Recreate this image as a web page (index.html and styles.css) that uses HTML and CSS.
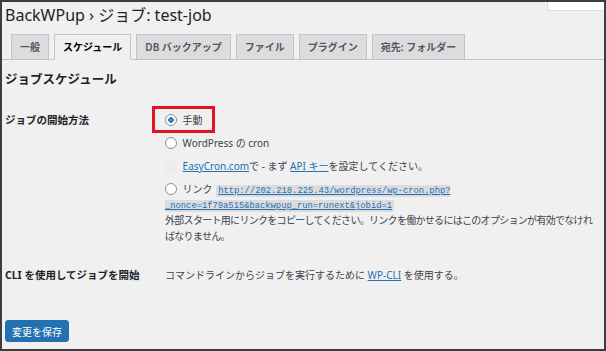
FILE: index.html
```html
<!DOCTYPE html>
<html lang="ja">

<head>
    <meta charset="UTF-8">
    <meta name="viewport" content="width=device-width, initial-scale=1.0">
    <title>BackWPup › ジョブ: test-job</title>
    <link rel="stylesheet" href="styles.css">
</head>

<body>
    <div class="frame">
        <div class="top">
            <h1 class="page-title">BackWPup › ジョブ: test-job</h1>
            <div class="screen-opts"></div>
        </div>

        <nav class="tabs">
            <a class="tab" href="#">一般</a>
            <a class="tab active" href="#">スケジュール</a>
            <a class="tab" href="#">DB バックアップ</a>
            <a class="tab" href="#">ファイル</a>
            <a class="tab" href="#">プラグイン</a>
            <a class="tab" href="#">宛先: フォルダー</a>
        </nav>

        <h2 class="section-title">ジョブスケジュール</h2>

        <div class="form-row">
            <div class="row-label">ジョブの開始方法</div>
            <div class="row-field">
                <label class="option">
                    <span class="highlight"><input type="radio" name="activetype" checked> 手動</span>
                </label>
                <label class="option">
                    <input type="radio" name="activetype"> WordPress の cron
                </label>
                <label class="option">
                    <input type="checkbox" disabled> <a href="#">EasyCron.com</a>で - まず <a href="#">API キー</a>を設定してください。
                </label>
                <label class="option link-option">
                    <input type="radio" name="activetype"> リンク <code><a href="#">http://202.218.225.43/wordpress/wp-cron.php?<wbr>_nonce=1f79a515&amp;backwpup_run=runext&amp;jobid=1</a></code>
                </label>
                <p class="description">外部スタート用にリンクをコピーしてください。リンクを働かせるにはこのオプションが有効でなければなりません。</p>
            </div>
        </div>

        <div class="form-row">
            <div class="row-label">CLI を使用してジョブを開始</div>
            <div class="row-field">
                <p class="plain">コマンドラインからジョブを実行するために <a href="#">WP-CLI</a> を使用する。</p>
            </div>
        </div>

        <button class="save-btn" type="button">変更を保存</button>
    </div>
</body>

</html>
```

FILE: styles.css
```css
body {
    margin: 0;
    padding: 0;
    font-family: "Noto Sans", "Noto Sans CJK JP", sans-serif;
    font-size: 10px;
    color: #3c434a;
    background: #fff;
}

.frame {
    height: 351px;
    box-sizing: border-box;
    border: 2px solid #3d3d3d;
    background: #f0f0f1;
    padding: 0 3px;
    overflow: hidden;
}

.top {
    display: flex;
    justify-content: space-between;
    align-items: flex-start;
}

.page-title {
    margin: 0;
    padding-top: 1px;
    font-size: 16px;
    line-height: 24px;
    font-weight: 400;
    color: #1d2327;
}

.screen-opts {
    width: 56px;
    height: 8px;
    margin-right: -3px;
    background: #fff;
    border: 1px solid #dcdcde;
    border-top: none;
    border-right: none;
    border-radius: 0 0 0 3px;
}

.tabs {
    display: flex;
    gap: 5px;
    margin: 7px -3px 0;
    padding-left: 9px;
    border-bottom: 1px solid #c3c4c7;
}

.tab {
    display: block;
    padding: 0 8px;
    height: 24px;
    line-height: 24px;
    font-size: 10px;
    font-weight: 600;
    color: #50575e;
    text-decoration: none;
    background: #dcdcde;
    border: 1px solid #c3c4c7;
    border-bottom: none;
    margin-bottom: -1px;
}

.tab.active {
    background: #f0f0f1;
    color: #000;
    border-bottom: 1px solid #f0f0f1;
}

.section-title {
    margin: 11px 0 12px;
    font-size: 12.5px;
    line-height: 18px;
    font-weight: 700;
    color: #1d2327;
}

.form-row {
    display: grid;
    grid-template-columns: 160px 1fr;
    padding: 12px 0;
}

.row-label {
    font-weight: 700;
    font-size: 10.5px;
    line-height: 15px;
    color: #1d2327;
}

.row-field a {
    color: #2271b1;
}

.option {
    display: block;
    line-height: 15px;
    margin-bottom: 8px;
}

.link-option {
    margin-bottom: 0;
}

.plain {
    margin: 0;
    line-height: 15px;
}

.highlight {
    position: relative;
}

.highlight::after {
    content: "";
    position: absolute;
    left: -13px;
    top: -7px;
    right: -12px;
    bottom: -6px;
    border: 3px solid #e5131d;
}

.option input {
    appearance: none;
    width: 12px;
    height: 12px;
    margin: 0 3px 0 0;
    vertical-align: -2px;
    background: #fff;
    border: 1px solid #8c8f94;
    border-radius: 50%;
    box-sizing: border-box;
}

.option input:checked {
    border-color: #8c8f94;
    background: radial-gradient(circle, #3582c4 0 2.6px, #fff 3px);
}

.option input[type="checkbox"] {
    border-radius: 2px;
    border-color: #ececec;
    background: #ececec;
}

code {
    font-family: "Liberation Mono", monospace;
    font-size: 8.8px;
    line-height: 10px;
    background: #dcdcde;
    padding: 1px 2px;
    margin-left: 1px;
}

code a {
    color: #2271b1;
}

.description {
    margin: 0;
    line-height: 16px;
    letter-spacing: -0.7px;
    color: #3c434a;
}

.save-btn {
    display: block;
    margin-top: 25px;
    height: 22px;
    padding: 0 6px;
    font-family: "Noto Sans", "Noto Sans CJK JP", sans-serif;
    font-size: 10px;
    color: #fff;
    background: #2271b1;
    border: 1px solid #2271b1;
    border-radius: 3px;
    cursor: pointer;
}
```
